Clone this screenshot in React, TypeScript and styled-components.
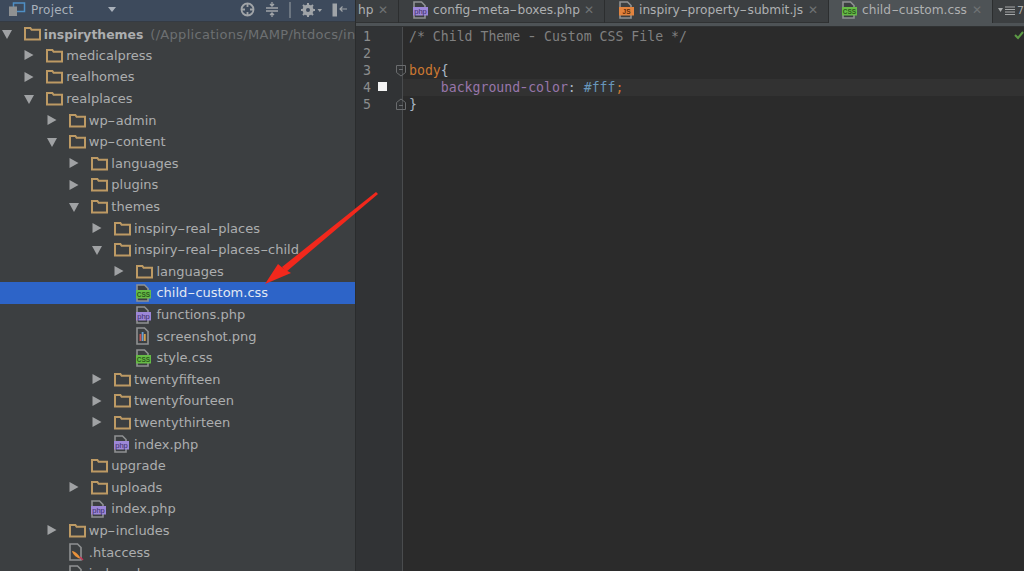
import React from 'react';
import styled, { createGlobalStyle } from 'styled-components';

const GlobalStyle = createGlobalStyle`
  html, body { margin: 0; padding: 0; background: #2b2b2b; }
  #root { width: 1024px; height: 571px; overflow: hidden; }
`;

const Page = styled.div`
  position: relative;
  display: flex;
  width: 1024px;
  height: 571px;
  overflow: hidden;
  font-family: "DejaVu Sans", sans-serif;
`;

const Sidebar = styled.aside`
  width: 355px;
  flex: none;
  display: flex;
  flex-direction: column;
  background: #3c3f41;
  border-right: 1px solid #2a2c2d;
`;

const PanelHeader = styled.header`
  height: 22px;
  flex: none;
  display: flex;
  align-items: center;
  padding: 0 8px 2px 9px;
  box-sizing: border-box;
  background: #3d4a5c;
  border-bottom: 1px solid #353b43;
  color: #a9b1bb;
  font-size: 12px;
  letter-spacing: 0.2px;
`;

const PanelTitle = styled.span`
  margin-left: 5px;
  flex: 1;
`;

const HeaderCaret = styled.svg`
  margin-right: 124px;
`;

const HeaderTools = styled.div`
  display: flex;
  align-items: center;
  gap: 10px;
`;

const Tree = styled.div`
  padding-top: 1px;
`;

const Row = styled.div<{ $depth: number; $selected?: boolean }>`
  height: 21.6px;
  display: flex;
  align-items: center;
  overflow: hidden;
  padding-left: ${p => 1.7 + p.$depth * 22.55}px;
  background: ${p => (p.$selected ? '#2d64c8' : 'transparent')};
  color: ${p => (p.$selected ? '#e2e8f3' : '#acaeaf')};
  font-size: 13px;
  white-space: nowrap;
`;

const ArrowSlot = styled.span`
  width: 22px;
  flex: none;
  display: flex;
`;

const IconSlot = styled.span`
  width: 20px;
  flex: none;
  display: flex;
`;

const RootName = styled.b`
  font-size: 12.4px;
  font-weight: 700;
  padding-top: 1px;
`;

const RootPath = styled.span`
  margin-left: 7px;
  padding-top: 1px;
  color: #6d7072;
  letter-spacing: 0.3px;
`;

const Main = styled.main`
  flex: 1;
  min-width: 0;
  display: flex;
  flex-direction: column;
`;

const TabBar = styled.nav`
  height: 23px;
  flex: none;
  display: flex;
  background: #3c3f41;
`;

const Tab = styled.div<{ $width: number; $active?: boolean }>`
  width: ${p => p.$width}px;
  flex: none;
  display: flex;
  align-items: center;
  gap: 4px;
  padding: 0 0 3px ${p => (p.$active ? 13 : 14)}px;
  box-sizing: border-box;
  background: ${p => (p.$active ? '#4e5356' : '#3c3f41')};
  border-right: 1px solid #2c2e2f;
  box-shadow: ${p => (p.$active ? 'none' : 'inset 0 -1px 0 #303233')};
  color: #aeb0b1;
  font-size: 12.2px;
  white-space: nowrap;
  overflow: hidden;
`;

const CutTab = styled(Tab)`
  padding-left: 2px;
`;

const TabClose = styled.span`
  margin-left: auto;
  margin-right: 10px;
  color: #6f7274;
  font-size: 12px;
`;

const TabMenu = styled.div`
  flex: 1;
  display: flex;
  align-items: center;
  gap: 2px;
  padding: 0 0 3px 5px;
  color: #a6a8a9;
  font-size: 11px;
`;

const TabStrip = styled.div`
  height: 4px;
  flex: none;
  background: #4e5356;
  border-bottom: 1px solid #303233;
  box-sizing: border-box;
`;

const Editor = styled.section`
  position: relative;
  flex: 1;
  display: flex;
  background: #2b2b2b;
  font-family: "DejaVu Sans Mono", monospace;
  font-size: 13.2px;
`;

const Gutter = styled.div`
  width: 47px;
  flex: none;
  padding-top: 1px;
  box-sizing: border-box;
  background: #313335;
  border-right: 1px solid #4a4c4e;
  color: #8b8d8e;
`;

const GutterRow = styled.div`
  position: relative;
  height: 17.1px;
  line-height: 17.1px;
  padding-left: 7px;
`;

const ChangeMark = styled.span`
  position: absolute;
  left: 22px;
  top: 3px;
  width: 9px;
  height: 9px;
  background: #f4f4f4;
`;

const FoldMark = styled.svg`
  position: absolute;
  left: 40px;
  top: 2px;
`;

const Code = styled.div`
  flex: 1;
  padding-top: 1px;
`;

const CodeLine = styled.div<{ $current?: boolean }>`
  height: 17.1px;
  line-height: 17.1px;
  padding-left: 6px;
  background: ${p => (p.$current ? '#323232' : 'transparent')};
  color: #a9b7c6;
  white-space: pre;
`;

const Comment = styled.span`
  color: #808080;
`;
const Selector = styled.span`
  color: #cc7832;
`;
const Prop = styled.span`
  color: #9876aa;
`;
const Value = styled.span`
  color: #6897bb;
`;

// the editor font draws a longer hyphen than ours does
const WideDash = styled.span`
  display: inline-block;
  margin: 0 1.7px;
  transform: scaleX(1.7);
`;

const MonoDash = styled.span`
  display: inline-block;
  transform: scaleX(1.3);
`;

const OkMark = styled.svg`
  position: absolute;
  right: 0;
  top: 4px;
`;

const Overlay = styled.svg`
  position: absolute;
  left: 260px;
  top: 185px;
  pointer-events: none;
`;

const Dashed = ({ text }: { text: string }) => (
  <span>
    {text.split('-').map((part, i) => (
      <React.Fragment key={i}>
        {i > 0 && <WideDash>-</WideDash>}
        {part}
      </React.Fragment>
    ))}
  </span>
);

const Triangle = ({ open }: { open?: boolean }) => (
  <svg width="10" height="10" viewBox="0 0 10 10">
    <path d={open ? 'M0 1h10L5 10z' : 'M.5 0v10L9.500 5z'} fill="#a0a2a4" />
  </svg>
);

const Folder = () => (
  <svg width="17" height="15" viewBox="0 0 17 15">
    <path d="M1 2h5.400l1.200 1.800H16v9.800H1z" fill="none" stroke="#bd9a64" strokeWidth="2" />
  </svg>
);

const labelColors = { css: '#66bb46', php: '#9d87d8', js: '#e2833e' };

const FileIcon = ({ kind }: { kind: 'css' | 'php' | 'png' | 'js' }) => (
  <svg width="16" height="18" viewBox="0 0 16 18" style={{ flex: 'none' }}>
    <path d="M1 1h7.500L12 4.500V17H1z" fill="#3c3f41" stroke="#8f9192" strokeWidth="1.600" />
    {kind === 'png' ? (
      <>
        <rect x="3.500" y="7" width="1.800" height="7" fill="#c75450" />
        <rect x="5.700" y="5" width="1.800" height="9" fill="#6a9fd4" />
        <rect x="7.900" y="7" width="1.800" height="7" fill="#d8a24a" />
      </>
    ) : (
      <>
        <rect x="0" y="6" width="15" height="8.500" fill={labelColors[kind]} />
        <text
          x="7.500"
          y="12.800"
          textAnchor="middle"
          fontSize={kind === 'php' ? 7.500 : 6.500}
          fontFamily="Liberation Sans, sans-serif"
          fontWeight={kind === 'php' ? 400 : 700}
          fill={kind === 'css' ? '#2c5a1d' : kind === 'php' ? '#3a2d66' : '#5a2c0a'}
        >
          {kind === 'php' ? 'php' : kind.toUpperCase()}
        </text>
      </>
    )}
  </svg>
);

const HtaccessIcon = () => (
  <svg width="16" height="18" viewBox="0 0 16 18">
    <path d="M1 1h7.500L12 4.500V17H1z" fill="#3c3f41" stroke="#8f9192" strokeWidth="1.600" />
    <path d="M3 8c3 0 7 4 9 8-4-1-8-4-9-8z" fill="#e8913a" />
    <path d="M11 14l3 3" stroke="#c9345a" strokeWidth="1.500" />
  </svg>
);

type TreeItem = {
  name: string;
  depth: number;
  kind: 'open' | 'closed' | 'plain' | 'css' | 'php' | 'png' | 'htaccess';
  selected?: boolean;
};

const items: TreeItem[] = [
  { name: 'medicalpress', depth: 1, kind: 'closed' },
  { name: 'realhomes', depth: 1, kind: 'closed' },
  { name: 'realplaces', depth: 1, kind: 'open' },
  { name: 'wp-admin', depth: 2, kind: 'closed' },
  { name: 'wp-content', depth: 2, kind: 'open' },
  { name: 'languages', depth: 3, kind: 'closed' },
  { name: 'plugins', depth: 3, kind: 'closed' },
  { name: 'themes', depth: 3, kind: 'open' },
  { name: 'inspiry-real-places', depth: 4, kind: 'closed' },
  { name: 'inspiry-real-places-child', depth: 4, kind: 'open' },
  { name: 'languages', depth: 5, kind: 'closed' },
  { name: 'child-custom.css', depth: 5, kind: 'css', selected: true },
  { name: 'functions.php', depth: 5, kind: 'php' },
  { name: 'screenshot.png', depth: 5, kind: 'png' },
  { name: 'style.css', depth: 5, kind: 'css' },
  { name: 'twentyfifteen', depth: 4, kind: 'closed' },
  { name: 'twentyfourteen', depth: 4, kind: 'closed' },
  { name: 'twentythirteen', depth: 4, kind: 'closed' },
  { name: 'index.php', depth: 4, kind: 'php' },
  { name: 'upgrade', depth: 3, kind: 'plain' },
  { name: 'uploads', depth: 3, kind: 'closed' },
  { name: 'index.php', depth: 3, kind: 'php' },
  { name: 'wp-includes', depth: 2, kind: 'closed' },
  { name: '.htaccess', depth: 2, kind: 'htaccess' },
  { name: 'index.php', depth: 2, kind: 'php' },
];

const ItemIcon = ({ kind }: { kind: TreeItem['kind'] }) => {
  if (kind === 'open' || kind === 'closed' || kind === 'plain') return <Folder />;
  if (kind === 'htaccess') return <HtaccessIcon />;
  return <FileIcon kind={kind} />;
};

const App = () => (
  <Page>
    <GlobalStyle />
    <Sidebar>
      <PanelHeader>
        <svg width="17" height="15" viewBox="0 0 17 15">
          <rect x="4.500" y="1" width="11" height="8.500" fill="#3d4a5c" stroke="#4f8fc4" strokeWidth="1.500" />
          <rect x="0" y="4.500" width="8" height="9.500" fill="#8f9192" />
        </svg>
        <PanelTitle>Project</PanelTitle>
        <HeaderCaret width="8" height="5" viewBox="0 0 8 5">
          <path d="M0 0h8L4 5z" fill="#a9b1bb" />
        </HeaderCaret>
        <HeaderTools>
          <svg width="15" height="15" viewBox="0 0 15 15" fill="none" stroke="#a0a4a8" strokeWidth="1.800">
            <circle cx="7.500" cy="7.500" r="6" />
            <path d="M7.500 1v4M7.500 10v4M1 7.500h4M10 7.500h4" />
          </svg>
          <svg width="14" height="15" viewBox="0 0 14 15" fill="none" stroke="#a0a4a8" strokeWidth="1.300">
            <path d="M1 6h12M1 9h12M7 0v3.500M5 2l2 2 2-2M7 15v-3.500M5 13l2-2 2 2" />
          </svg>
          <svg width="2" height="16" viewBox="0 0 2 16">
            <rect width="2" height="16" fill="#6c7681" />
          </svg>
          <svg width="21" height="14" viewBox="0 0 21 14">
            <circle cx="7" cy="7" r="4" fill="none" stroke="#a0a4a8" strokeWidth="3" />
            <path d="M7 0v14M0 7h14M2 2l10 10M12 2L2 12" stroke="#a0a4a8" strokeWidth="2" />
            <circle cx="7" cy="7" r="2" fill="#3d4a5c" />
            <path d="M16.500 6h4.500l-2.250 3z" fill="#a0a4a8" />
          </svg>
          <svg width="15" height="14" viewBox="0 0 15 14" fill="none" stroke="#a0a4a8">
            <rect x="1" y="1" width="3.500" height="12" fill="#a0a4a8" strokeWidth="1" />
            <path d="M15 6H8M10.500 3.500L8 6l2.500 2.500" strokeWidth="1.200" />
          </svg>
        </HeaderTools>
      </PanelHeader>
      <Tree>
        <Row $depth={0}>
          <ArrowSlot><Triangle open /></ArrowSlot>
          <IconSlot><Folder /></IconSlot>
          <RootName>inspirythemes</RootName>
          <RootPath>(/Applications/MAMP/htdocs/in</RootPath>
        </Row>
        {items.map((item, i) => (
          <Row key={i} $depth={item.depth} $selected={item.selected}>
            <ArrowSlot>
              {item.kind === 'open' && <Triangle open />}
              {item.kind === 'closed' && <Triangle />}
            </ArrowSlot>
            <IconSlot><ItemIcon kind={item.kind} /></IconSlot>
            <Dashed text={item.name} />
          </Row>
        ))}
      </Tree>
    </Sidebar>
    <Main>
      <TabBar>
        <CutTab $width={43}>hp<TabClose>✕</TabClose></CutTab>
        <Tab $width={206}><FileIcon kind="php" /><Dashed text="config-meta-boxes.php" /><TabClose>✕</TabClose></Tab>
        <Tab $width={224}><FileIcon kind="js" /><Dashed text="inspiry-property-submit.js" /><TabClose>✕</TabClose></Tab>
        <Tab $width={164} $active><FileIcon kind="css" /><Dashed text="child-custom.css" /><TabClose>✕</TabClose></Tab>
        <TabMenu>
          <svg width="5" height="4" viewBox="0 0 5 4"><path d="M0 0h5L2.500 4z" fill="#a6a8a9" /></svg>
          <svg width="10" height="9" viewBox="0 0 10 9"><path d="M0 1h10M0 3.500h10M0 6h10M0 8.500h10" stroke="#a6a8a9" /></svg>
          7
        </TabMenu>
      </TabBar>
      <TabStrip />
      <Editor>
        <Gutter>
          <GutterRow>1</GutterRow>
          <GutterRow>2</GutterRow>
          <GutterRow>
            3
            <FoldMark width="10" height="13" viewBox="0 0 10 13" fill="none" stroke="#6a6c6e">
              <path d="M.5 1.500h9v7L5 12 .5 8.500zM3 5.500h4" />
            </FoldMark>
          </GutterRow>
          <GutterRow>4<ChangeMark /></GutterRow>
          <GutterRow>
            5
            <FoldMark width="10" height="13" viewBox="0 0 10 13" fill="none" stroke="#6a6c6e">
              <path d="M.5 11.500h9v-7L5 1 .5 4.500zM3 7.500h4" />
            </FoldMark>
          </GutterRow>
        </Gutter>
        <Code>
          <CodeLine><Comment>/* Child Theme <MonoDash>-</MonoDash> Custom CSS File */</Comment></CodeLine>
          <CodeLine />
          <CodeLine><Selector>body</Selector>{'{'}</CodeLine>
          <CodeLine $current>    <Prop>background<MonoDash>-</MonoDash>color</Prop>: <Value>#fff</Value><Selector>;</Selector></CodeLine>
          <CodeLine>{'}'}</CodeLine>
        </Code>
        <OkMark width="10" height="9" viewBox="0 0 10 9" fill="none" stroke="#5c9a45" strokeWidth="2">
          <path d="M1 4l3 3 5-6" />
        </OkMark>
      </Editor>
    </Main>
    <Overlay width="125" height="105" viewBox="0 0 125 105">
      <path d="M116 7L118 9 26 87 22 82z" fill="#f2281c" />
      <path d="M5 99L18 79 24 84 31 88z" fill="#f2281c" />
    </Overlay>
  </Page>
);

export default App;
